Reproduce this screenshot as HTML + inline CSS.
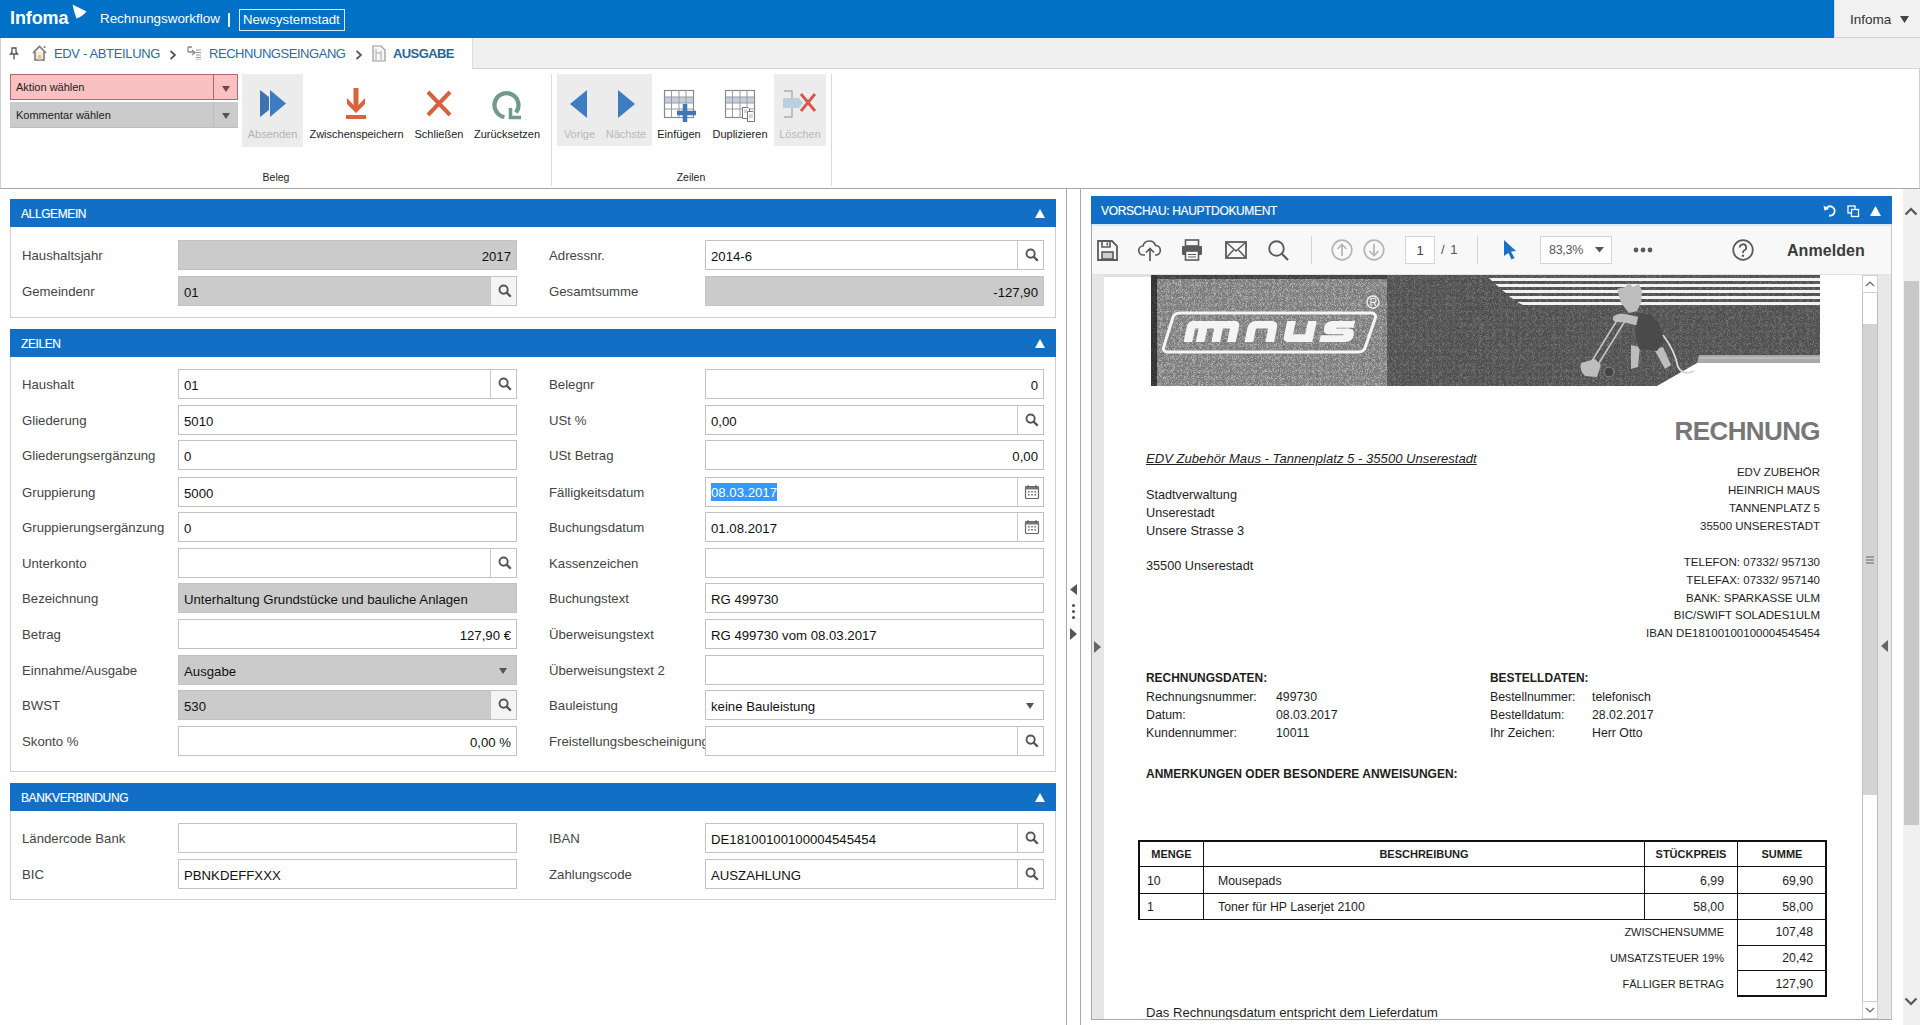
<!DOCTYPE html>
<html><head><meta charset="utf-8">
<style>
*{box-sizing:border-box;margin:0;padding:0}
html,body{width:1920px;height:1025px;overflow:hidden;background:#fff;font-family:"Liberation Sans",sans-serif;color:#222}
.a{position:absolute}
#top{left:0;top:0;width:1920px;height:38px;background:#0071c6}
#crumb{left:0;top:38px;width:1920px;height:31px;background:#f0f0f0;border-bottom:1px solid #d4d4d4}
#ribbon{left:0;top:69px;width:1920px;height:120px;background:#fff;border-bottom:1px solid #a6a6a6;border-left:1px solid #d0d0d0;border-right:1px solid #d0d0d0}
.hdr{background:#1170c6;color:#fff;font-size:12px;letter-spacing:-0.4px;-webkit-text-stroke:0.15px #fff;height:28px;line-height:31px;padding-left:11px}
.sec{border:1px solid #d0d0d0;border-top:none;background:#fff}
.lbl{font-size:13.2px;color:#444;white-space:nowrap;line-height:16px}
.inp{height:30px;border:1px solid #c2c2c2;background:#fff;font-size:13.2px;color:#111;line-height:29px;padding:1px 5px 0 5px;white-space:nowrap;overflow:hidden}
.inp.g{background:#cbcbcb;border-color:#c2c2c2}
.inp.r{text-align:right}
.btn{position:absolute;right:0;top:0;width:26px;height:28px;border-left:1px solid #c8c8c8;background:#fff}
.rb{font-size:11px;color:#222;white-space:nowrap;text-align:center}
</style></head><body>
<div id="top" class="a">
 <div class="a" style="left:10px;top:7px;font-weight:bold;font-size:18px;color:#fff;line-height:22px;letter-spacing:-0.1px">Infoma</div>
 <svg class="a" style="left:72px;top:4px" width="16" height="16" viewBox="0 0 16 16"><path d="M0.5 0.5 L14.5 7.5 Q11 12 4.5 14.5 Q2 8 0.5 0.5 Z" fill="#fff"/></svg>
 <div class="a" style="left:100px;top:11px;font-size:13.4px;color:#fff;line-height:16px">Rechnungsworkflow</div>
 <div class="a" style="left:228px;top:13px;width:2px;height:14px;background:#e6f2ff"></div>
 <div class="a" style="left:239px;top:9px;width:106px;height:22px;border:1px solid #d8ecff;font-size:13.2px;color:#fff;line-height:19px;padding-left:3px">Newsystemstadt</div>
 <div class="a" style="left:1834px;top:0;width:86px;height:38px;background:#f1f1f1;border-left:1px solid #d6d6d6;border-bottom:1px solid #cfcfcf"></div>
 <div class="a" style="left:1850px;top:12px;font-size:13.5px;color:#333;line-height:16px">Infoma</div>
 <svg class="a" style="left:1900px;top:16px" width="9" height="8" viewBox="0 0 9 8"><path d="M0 0 L9 0 L4.5 7 Z" fill="#444"/></svg>
</div>
<div id="crumb" class="a">
 <div class="a" style="left:0;top:0;width:473px;height:31px;background:#fff;border-left:1px solid #d0d0d0;border-right:1px solid #dcdcdc"></div>
 <svg class="a" style="left:9px;top:9px" width="10" height="13" viewBox="0 0 10 13"><path d="M3 1 H7 V5 L8.5 7 H1.5 L3 5 Z" fill="none" stroke="#555" stroke-width="1.3"/><path d="M5 7 V12.5" stroke="#555" stroke-width="1.3"/></svg>
 <svg class="a" style="left:31px;top:7px" width="17" height="16" viewBox="0 0 17 16"><path d="M2 8 L8.5 1.5 L15 8" fill="none" stroke="#777" stroke-width="1.6"/><path d="M4 7 V15 H13 V7" fill="#f3ecd2" stroke="#777" stroke-width="1.5"/><rect x="7" y="10" width="3" height="5" fill="#d8c89a"/><circle cx="13.5" cy="2" r="1" fill="#777"/></svg>
 <div class="a" style="left:54px;top:8px;font-size:13px;color:#2e6a9e;line-height:16px;letter-spacing:-0.35px">EDV - ABTEILUNG</div>
 <svg class="a" style="left:169px;top:12px" width="8" height="10" viewBox="0 0 8 10"><path d="M1.5 1 L6 5 L1.5 9" fill="none" stroke="#555" stroke-width="1.7"/></svg>
 <svg class="a" style="left:186px;top:8px" width="16" height="14" viewBox="0 0 16 14"><path d="M2 1 H6 M2 1 V6 M2 6 H8" stroke="#888" stroke-width="1.3" fill="none"/><path d="M6 4 L9 6.5 L6 9" fill="none" stroke="#7a8fa0" stroke-width="1.3"/><path d="M10 4 H15 M10 6.5 H15 M10 9 H15 M10 11.5 H15 M10 14 H15" stroke="#999" stroke-width="1"/></svg>
 <div class="a" style="left:209px;top:8px;font-size:13px;color:#2e6a9e;line-height:16px;letter-spacing:-0.45px">RECHNUNGSEINGANG</div>
 <svg class="a" style="left:355px;top:12px" width="8" height="10" viewBox="0 0 8 10"><path d="M1.5 1 L6 5 L1.5 9" fill="none" stroke="#555" stroke-width="1.7"/></svg>
 <svg class="a" style="left:372px;top:7px" width="14" height="17" viewBox="0 0 14 17"><path d="M1 1 H9 L13 5 V16 H1 Z" fill="#f6f6f6" stroke="#999" stroke-width="1.2"/><path d="M4 4 V15 M9 6 V15 M4 8 H9" stroke="#aaa" stroke-width="1"/></svg>
 <div class="a" style="left:393px;top:8px;font-size:13px;font-weight:bold;color:#2a6796;line-height:16px;letter-spacing:-0.6px">AUSGABE</div>
</div>
<div id="ribbon" class="a">
 <div class="a" style="left:9px;top:5px;width:228px;height:26px;background:#f9c1c1;border:1px solid #b3666c;font-size:11px;line-height:24px;padding-left:5px;color:#222">Aktion wählen</div>
 <div class="a" style="left:212px;top:5px;width:1px;height:26px;background:#b3666c"></div>
 <svg class="a" style="left:221px;top:17px" width="8" height="6" viewBox="0 0 8 6"><path d="M0 0 H8 L4 6 Z" fill="#6e4848"/></svg>
 <div class="a" style="left:9px;top:33px;width:228px;height:26px;background:#cbcbcb;border-bottom:1px solid #bdbdbd;font-size:11px;line-height:26px;padding-left:6px;color:#222">Kommentar wählen</div>
 <div class="a" style="left:212px;top:33px;width:1px;height:26px;background:#bebebe"></div>
 <svg class="a" style="left:221px;top:44px" width="8" height="6" viewBox="0 0 8 6"><path d="M0 0 H8 L4 6 Z" fill="#555"/></svg>
 <!-- Absenden -->
 <div class="a" style="left:241px;top:5px;width:61px;height:73px;background:#ececec"></div>
 <svg class="a" style="left:258px;top:20px" width="28" height="29" viewBox="0 0 28 29"><path d="M1 1 L10 8 V21 L1 28 Z" fill="#3e73b0"/><path d="M11 1 L27 14.5 L11 28 Z" fill="#3d7cc0"/></svg>
 <div class="a rb" style="left:241px;top:59px;width:61px;color:#b3b3b3">Absenden</div>
 <!-- Zwischenspeichern -->
 <svg class="a" style="left:344px;top:19px" width="22" height="32" viewBox="0 0 22 32"><path d="M8.5 0 H13.5 V17 L20 10 V16 L11 25 L2 16 V10 L8.5 17 Z" fill="#d9623f"/><rect x="1" y="27" width="20" height="4" fill="#d9623f"/></svg>
 <div class="a rb" style="left:300px;top:59px;width:111px">Zwischenspeichern</div>
 <!-- Schliessen -->
 <svg class="a" style="left:425px;top:21px" width="26" height="27" viewBox="0 0 26 27"><path d="M2 2 L24 25 M24 2 L2 25" stroke="#d5623f" stroke-width="4"/></svg>
 <div class="a rb" style="left:408px;top:59px;width:60px">Schließen</div>
 <!-- Zuruecksetzen -->
 <svg class="a" style="left:490px;top:19px" width="32" height="32" viewBox="0 0 32 32"><path d="M13.4 29 A12 12 0 1 1 25 24.5" fill="none" stroke="#6f9a8c" stroke-width="4.3"/><path d="M19.5 20 V29.5 H30" fill="none" stroke="#6f9a8c" stroke-width="3.6"/></svg>
 <div class="a rb" style="left:470px;top:59px;width:72px">Zurücksetzen</div>
 <div class="a rb" style="left:240px;top:102px;width:70px;font-size:10.5px">Beleg</div>
 <div class="a" style="left:550px;top:5px;width:1px;height:112px;background:#d9d9d9"></div>
 <!-- Zeilen -->
 <div class="a" style="left:556px;top:5px;width:95px;height:72px;background:#ececec"></div>
 <svg class="a" style="left:568px;top:20px" width="19" height="30" viewBox="0 0 19 30"><path d="M18 1 V29 L1 15 Z" fill="#3d7cc0"/></svg>
 <svg class="a" style="left:616px;top:20px" width="19" height="30" viewBox="0 0 19 30"><path d="M1 1 V29 L18 15 Z" fill="#3d7cc0"/></svg>
 <div class="a rb" style="left:556px;top:59px;width:45px;color:#b8b8b8">Vorige</div>
 <div class="a rb" style="left:600px;top:59px;width:50px;color:#b8b8b8">Nächste</div>
 <svg class="a" style="left:662px;top:20px" width="35" height="34" viewBox="0 0 35 34"><rect x="1.5" y="1.5" width="29" height="27" fill="#fff" stroke="#8a8a8a" stroke-width="1.2"/><rect x="2" y="8" width="28" height="6" fill="#bfcfdf"/><path d="M1.5 8 H30.5 M1.5 14 H30.5 M1.5 20 H30.5 M8.5 1.5 V28.5 M16 1.5 V28.5 M23 1.5 V28.5" stroke="#9a9a9a" stroke-width="1"/><path d="M22 15 V33 M14 24 H33" stroke="#3e78b6" stroke-width="4.5"/></svg>
 <div class="a rb" style="left:650px;top:59px;width:56px">Einfügen</div>
 <svg class="a" style="left:723px;top:20px" width="35" height="34" viewBox="0 0 35 34"><rect x="1.5" y="1.5" width="29" height="27" fill="#fff" stroke="#8a8a8a" stroke-width="1.2"/><rect x="2" y="8" width="28" height="6" fill="#bfcfdf"/><path d="M1.5 8 H30.5 M1.5 14 H30.5 M1.5 20 H30.5 M8.5 1.5 V28.5 M16 1.5 V28.5 M23 1.5 V28.5" stroke="#9a9a9a" stroke-width="1"/><path d="M18.5 18.5 H24 L25.5 20 V29.5 H18.5 Z" fill="#fff" stroke="#777" stroke-width="1"/><path d="M20 21 H23 M20 23 H23" stroke="#999" stroke-width="0.8"/><path d="M23.5 22.5 H29 L30.5 24 V32.5 H23.5 Z" fill="#fff" stroke="#777" stroke-width="1"/><path d="M25 26 H29 M25 28 H29" stroke="#8aa4c0" stroke-width="0.9"/></svg>
 <div class="a rb" style="left:706px;top:59px;width:66px">Duplizieren</div>
 <div class="a" style="left:773px;top:5px;width:52px;height:72px;background:#ececec"></div>
 <svg class="a" style="left:781px;top:20px" width="35" height="30" viewBox="0 0 35 30"><path d="M2 2 H10 V28 H2" fill="none" stroke="#aaa" stroke-width="1.3"/><rect x="1" y="9" width="16" height="10" fill="#bccfe0"/><path d="M17 9 L21 14 L17 19 Z" fill="#bccfe0"/><path d="M19 5 L33 22 M33 5 L19 22" stroke="#d9564a" stroke-width="2.8"/></svg>
 <div class="a rb" style="left:773px;top:59px;width:52px;color:#b8b8b8">Löschen</div>
 <div class="a rb" style="left:655px;top:102px;width:70px;font-size:10.5px">Zeilen</div>
 <div class="a" style="left:830px;top:5px;width:1px;height:112px;background:#d9d9d9"></div>
</div>
<!--LEFT--><div id="left">
<div class="a hdr" style="left:10px;top:199px;width:1046px">ALLGEMEIN<svg class="a" style="left:1025px;top:10px" width="10" height="9" viewBox="0 0 10 9"><path d="M0 9 L5 0 L10 9 Z" fill="#fff"/></svg></div>
<div class="a sec" style="left:10px;top:227px;width:1046px;height:91px"></div>
<div class="a lbl" style="left:22px;top:248px">Haushaltsjahr</div>
<div class="a inp g r" style="left:178px;top:240px;width:339px;">2017</div>
<div class="a lbl" style="left:22px;top:284px">Gemeindenr</div>
<div class="a inp g" style="left:178px;top:276px;width:339px;padding-right:32px;">01<div class="btn" style="background:#f4f4f4"><svg class="a" style="left:7px;top:7px" width="14" height="14" viewBox="0 0 14 14"><circle cx="5.6" cy="5.6" r="4.1" fill="none" stroke="#555" stroke-width="1.9"/><path d="M8.6 8.6 L12.8 12.8" stroke="#555" stroke-width="2.3"/></svg></div></div>
<div class="a lbl" style="left:549px;top:248px">Adressnr.</div>
<div class="a inp" style="left:705px;top:240px;width:339px;padding-right:32px;">2014-6<div class="btn" style="background:#fff"><svg class="a" style="left:7px;top:7px" width="14" height="14" viewBox="0 0 14 14"><circle cx="5.6" cy="5.6" r="4.1" fill="none" stroke="#555" stroke-width="1.9"/><path d="M8.6 8.6 L12.8 12.8" stroke="#555" stroke-width="2.3"/></svg></div></div>
<div class="a lbl" style="left:549px;top:284px">Gesamtsumme</div>
<div class="a inp g r" style="left:705px;top:276px;width:339px;">-127,90</div>
<div class="a hdr" style="left:10px;top:329px;width:1046px">ZEILEN<svg class="a" style="left:1025px;top:10px" width="10" height="9" viewBox="0 0 10 9"><path d="M0 9 L5 0 L10 9 Z" fill="#fff"/></svg></div>
<div class="a sec" style="left:10px;top:357px;width:1046px;height:415px"></div>
<div class="a lbl" style="left:22px;top:377px">Haushalt</div>
<div class="a inp" style="left:178px;top:369px;width:339px;padding-right:32px;">01<div class="btn" style="background:#fff"><svg class="a" style="left:7px;top:7px" width="14" height="14" viewBox="0 0 14 14"><circle cx="5.6" cy="5.6" r="4.1" fill="none" stroke="#555" stroke-width="1.9"/><path d="M8.6 8.6 L12.8 12.8" stroke="#555" stroke-width="2.3"/></svg></div></div>
<div class="a lbl" style="left:22px;top:413px">Gliederung</div>
<div class="a inp" style="left:178px;top:405px;width:339px;">5010</div>
<div class="a lbl" style="left:22px;top:448px">Gliederungsergänzung</div>
<div class="a inp" style="left:178px;top:440px;width:339px;">0</div>
<div class="a lbl" style="left:22px;top:485px">Gruppierung</div>
<div class="a inp" style="left:178px;top:477px;width:339px;">5000</div>
<div class="a lbl" style="left:22px;top:520px">Gruppierungsergänzung</div>
<div class="a inp" style="left:178px;top:512px;width:339px;">0</div>
<div class="a lbl" style="left:22px;top:556px">Unterkonto</div>
<div class="a inp" style="left:178px;top:548px;width:339px;padding-right:32px;"><div class="btn" style="background:#fff"><svg class="a" style="left:7px;top:7px" width="14" height="14" viewBox="0 0 14 14"><circle cx="5.6" cy="5.6" r="4.1" fill="none" stroke="#555" stroke-width="1.9"/><path d="M8.6 8.6 L12.8 12.8" stroke="#555" stroke-width="2.3"/></svg></div></div>
<div class="a lbl" style="left:22px;top:591px">Bezeichnung</div>
<div class="a inp g" style="left:178px;top:583px;width:339px;">Unterhaltung Grundstücke und bauliche Anlagen</div>
<div class="a lbl" style="left:22px;top:627px">Betrag</div>
<div class="a inp r" style="left:178px;top:619px;width:339px;">127,90 €</div>
<div class="a lbl" style="left:22px;top:663px">Einnahme/Ausgabe</div>
<div class="a inp g" style="left:178px;top:655px;width:339px;padding-right:32px;">Ausgabe<div class="btn" style="border-left:none;background:transparent"><svg class="a" style="left:9px;top:12px" width="8" height="6" viewBox="0 0 8 6"><path d="M0 0 H8 L4 6 Z" fill="#555"/></svg></div></div>
<div class="a lbl" style="left:22px;top:698px">BWST</div>
<div class="a inp g" style="left:178px;top:690px;width:339px;padding-right:32px;">530<div class="btn" style="background:#f4f4f4"><svg class="a" style="left:7px;top:7px" width="14" height="14" viewBox="0 0 14 14"><circle cx="5.6" cy="5.6" r="4.1" fill="none" stroke="#555" stroke-width="1.9"/><path d="M8.6 8.6 L12.8 12.8" stroke="#555" stroke-width="2.3"/></svg></div></div>
<div class="a lbl" style="left:22px;top:734px">Skonto %</div>
<div class="a inp r" style="left:178px;top:726px;width:339px;">0,00 %</div>
<div class="a lbl" style="left:549px;top:377px">Belegnr</div>
<div class="a inp r" style="left:705px;top:369px;width:339px;">0</div>
<div class="a lbl" style="left:549px;top:413px">USt %</div>
<div class="a inp" style="left:705px;top:405px;width:339px;padding-right:32px;">0,00<div class="btn" style="background:#fff"><svg class="a" style="left:7px;top:7px" width="14" height="14" viewBox="0 0 14 14"><circle cx="5.6" cy="5.6" r="4.1" fill="none" stroke="#555" stroke-width="1.9"/><path d="M8.6 8.6 L12.8 12.8" stroke="#555" stroke-width="2.3"/></svg></div></div>
<div class="a lbl" style="left:549px;top:448px">USt Betrag</div>
<div class="a inp r" style="left:705px;top:440px;width:339px;">0,00</div>
<div class="a lbl" style="left:549px;top:485px">Fälligkeitsdatum</div>
<div class="a inp" style="left:705px;top:477px;width:339px;padding-right:32px;"><span style="background:#3399ff;color:#fff;padding:2px 0 1px 0;position:relative;top:-1px">08.03.2017</span><div class="btn" style="background:#fff"><svg class="a" style="left:6px;top:6px" width="16" height="16" viewBox="0 0 16 16"><rect x="1.5" y="2.5" width="13" height="12" rx="1" fill="#fff" stroke="#666" stroke-width="1.2"/><rect x="1.5" y="2.5" width="13" height="3" fill="#777"/><path d="M4 1 V4 M12 1 V4" stroke="#666" stroke-width="1.2"/><g fill="#777"><rect x="4" y="7" width="1.6" height="1.6"/><rect x="7.2" y="7" width="1.6" height="1.6"/><rect x="10.4" y="7" width="1.6" height="1.6"/><rect x="4" y="10" width="1.6" height="1.6"/><rect x="7.2" y="10" width="1.6" height="1.6"/><rect x="10.4" y="10" width="1.6" height="1.6"/></g></svg></div></div>
<div class="a lbl" style="left:549px;top:520px">Buchungsdatum</div>
<div class="a inp" style="left:705px;top:512px;width:339px;padding-right:32px;">01.08.2017<div class="btn" style="background:#fff"><svg class="a" style="left:6px;top:6px" width="16" height="16" viewBox="0 0 16 16"><rect x="1.5" y="2.5" width="13" height="12" rx="1" fill="#fff" stroke="#666" stroke-width="1.2"/><rect x="1.5" y="2.5" width="13" height="3" fill="#777"/><path d="M4 1 V4 M12 1 V4" stroke="#666" stroke-width="1.2"/><g fill="#777"><rect x="4" y="7" width="1.6" height="1.6"/><rect x="7.2" y="7" width="1.6" height="1.6"/><rect x="10.4" y="7" width="1.6" height="1.6"/><rect x="4" y="10" width="1.6" height="1.6"/><rect x="7.2" y="10" width="1.6" height="1.6"/><rect x="10.4" y="10" width="1.6" height="1.6"/></g></svg></div></div>
<div class="a lbl" style="left:549px;top:556px">Kassenzeichen</div>
<div class="a inp" style="left:705px;top:548px;width:339px;"></div>
<div class="a lbl" style="left:549px;top:591px">Buchungstext</div>
<div class="a inp" style="left:705px;top:583px;width:339px;">RG 499730</div>
<div class="a lbl" style="left:549px;top:627px">Überweisungstext</div>
<div class="a inp" style="left:705px;top:619px;width:339px;">RG 499730 vom 08.03.2017</div>
<div class="a lbl" style="left:549px;top:663px">Überweisungstext 2</div>
<div class="a inp" style="left:705px;top:655px;width:339px;"></div>
<div class="a lbl" style="left:549px;top:698px">Bauleistung</div>
<div class="a inp" style="left:705px;top:690px;width:339px;padding-right:32px;">keine Bauleistung<div class="btn" style="border-left:none;background:transparent"><svg class="a" style="left:9px;top:12px" width="8" height="6" viewBox="0 0 8 6"><path d="M0 0 H8 L4 6 Z" fill="#555"/></svg></div></div>
<div class="a lbl" style="left:549px;top:734px">Freistellungsbescheinigung</div>
<div class="a inp" style="left:705px;top:726px;width:339px;padding-right:32px;"><div class="btn" style="background:#fff"><svg class="a" style="left:7px;top:7px" width="14" height="14" viewBox="0 0 14 14"><circle cx="5.6" cy="5.6" r="4.1" fill="none" stroke="#555" stroke-width="1.9"/><path d="M8.6 8.6 L12.8 12.8" stroke="#555" stroke-width="2.3"/></svg></div></div>
<div class="a hdr" style="left:10px;top:783px;width:1046px">BANKVERBINDUNG<svg class="a" style="left:1025px;top:10px" width="10" height="9" viewBox="0 0 10 9"><path d="M0 9 L5 0 L10 9 Z" fill="#fff"/></svg></div>
<div class="a sec" style="left:10px;top:811px;width:1046px;height:89px"></div>
<div class="a lbl" style="left:22px;top:831px">Ländercode Bank</div>
<div class="a inp" style="left:178px;top:823px;width:339px;"></div>
<div class="a lbl" style="left:22px;top:867px">BIC</div>
<div class="a inp" style="left:178px;top:859px;width:339px;">PBNKDEFFXXX</div>
<div class="a lbl" style="left:549px;top:831px">IBAN</div>
<div class="a inp" style="left:705px;top:823px;width:339px;padding-right:32px;">DE18100100100004545454<div class="btn" style="background:#fff"><svg class="a" style="left:7px;top:7px" width="14" height="14" viewBox="0 0 14 14"><circle cx="5.6" cy="5.6" r="4.1" fill="none" stroke="#555" stroke-width="1.9"/><path d="M8.6 8.6 L12.8 12.8" stroke="#555" stroke-width="2.3"/></svg></div></div>
<div class="a lbl" style="left:549px;top:867px">Zahlungscode</div>
<div class="a inp" style="left:705px;top:859px;width:339px;padding-right:32px;">AUSZAHLUNG<div class="btn" style="background:#fff"><svg class="a" style="left:7px;top:7px" width="14" height="14" viewBox="0 0 14 14"><circle cx="5.6" cy="5.6" r="4.1" fill="none" stroke="#555" stroke-width="1.9"/><path d="M8.6 8.6 L12.8 12.8" stroke="#555" stroke-width="2.3"/></svg></div></div>
</div><!--/LEFT-->
<!--RIGHT--><div id="right">
<div class="a" style="left:1066px;top:189px;width:1px;height:836px;background:#a8a8a8"></div>
<div class="a" style="left:1080px;top:189px;width:1px;height:836px;background:#a8a8a8"></div>
<svg class="a" style="left:1068px;top:584px" width="11" height="58" viewBox="0 0 11 58"><path d="M9 0 V11 L2 5.5 Z" fill="#555"/><circle cx="5.5" cy="21.5" r="1.6" fill="#555"/><circle cx="5.5" cy="27.5" r="1.6" fill="#555"/><circle cx="5.5" cy="33.5" r="1.6" fill="#555"/><path d="M2 44 V56 L9 50 Z" fill="#555"/></svg>
<div class="a" style="left:1091px;top:196px;width:801px;height:824px;border-left:1px solid #a8a8a8;border-right:1px solid #c8c8c8;border-bottom:1px solid #a8a8a8;background:#fff"></div>
<div class="a hdr" style="left:1091px;top:196px;width:801px;height:28px;line-height:30px;padding-left:10px;letter-spacing:-0.35px">VORSCHAU: HAUPTDOKUMENT</div>
<svg class="a" style="left:1823px;top:204px" width="14" height="13" viewBox="0 0 14 13"><path d="M3.5 4 A4.6 4.6 0 1 1 6 11.5" fill="none" stroke="#fff" stroke-width="1.8"/><path d="M0.5 1.5 L1.5 6.5 L6 5 Z" fill="#fff"/></svg>
<svg class="a" style="left:1847px;top:205px" width="13" height="13" viewBox="0 0 13 13"><rect x="1" y="1" width="7" height="7" fill="none" stroke="#fff" stroke-width="1.3"/><rect x="4.5" y="4.5" width="7" height="7" fill="#1170c6" stroke="#fff" stroke-width="1.3"/></svg>
<svg class="a" style="left:1870px;top:206px" width="11" height="10" viewBox="0 0 11 10"><path d="M0 10 L5.5 0 L11 10 Z" fill="#fff"/></svg>
<div class="a" style="left:1092px;top:224px;width:799px;height:51px;background:#f8f8f8;border-top:2px solid #d9e8f6;border-bottom:1px solid #e2e2e2"></div>
<svg class="a" style="left:1097px;top:240px" width="21" height="21" viewBox="0 0 21 21"><path d="M1 1 H15 L20 6 V20 H1 Z" fill="none" stroke="#5b5b5b" stroke-width="1.8"/><path d="M5 1 V7 H13 V1" fill="none" stroke="#5b5b5b" stroke-width="1.6"/><rect x="9.5" y="2.5" width="1.6" height="3" fill="#5b5b5b"/><rect x="5" y="12" width="11" height="7" fill="#cfcfcf" stroke="#5b5b5b" stroke-width="1.6"/></svg>
<svg class="a" style="left:1138px;top:239px" width="24" height="23" viewBox="0 0 24 23"><path d="M7 16 H5.5 A4.5 4.5 0 0 1 5 7 A6.5 6.5 0 0 1 17.5 6.5 A4.8 4.8 0 0 1 18.5 16 H17" fill="none" stroke="#5b5b5b" stroke-width="1.7"/><path d="M12 22 V10 M8 13.5 L12 9.5 L16 13.5" fill="none" stroke="#5b5b5b" stroke-width="1.7"/></svg>
<svg class="a" style="left:1181px;top:239px" width="22" height="22" viewBox="0 0 22 22"><rect x="4.5" y="1" width="13" height="6" fill="none" stroke="#5b5b5b" stroke-width="1.6"/><rect x="1" y="7" width="20" height="9" rx="1" fill="#5b5b5b"/><rect x="4.5" y="12" width="13" height="9" fill="#fff" stroke="#5b5b5b" stroke-width="1.6"/><path d="M7 15.5 H15 M7 18 H15" stroke="#5b5b5b" stroke-width="1.2"/></svg>
<svg class="a" style="left:1225px;top:241px" width="22" height="18" viewBox="0 0 22 18"><rect x="1" y="1" width="20" height="16" fill="none" stroke="#5b5b5b" stroke-width="1.8"/><path d="M1.5 1.5 L11 10 L20.5 1.5 M1.5 16.5 L8.5 9 M20.5 16.5 L13.5 9" fill="none" stroke="#5b5b5b" stroke-width="1.5"/></svg>
<svg class="a" style="left:1268px;top:240px" width="21" height="21" viewBox="0 0 21 21"><circle cx="8.5" cy="8.5" r="7.3" fill="none" stroke="#5b5b5b" stroke-width="1.9"/><path d="M13.8 13.8 L20 20" stroke="#5b5b5b" stroke-width="2.2"/></svg>
<div class="a" style="left:1311px;top:236px;width:1px;height:28px;background:#d4d4d4"></div>
<svg class="a" style="left:1331px;top:239px" width="22" height="22" viewBox="0 0 22 22"><circle cx="11" cy="11" r="9.8" fill="none" stroke="#b5b5b5" stroke-width="1.7"/><path d="M11 17 V5.5 M6.5 10 L11 5.5 L15.5 10" fill="none" stroke="#b5b5b5" stroke-width="1.7"/></svg>
<svg class="a" style="left:1363px;top:239px" width="22" height="22" viewBox="0 0 22 22"><circle cx="11" cy="11" r="9.8" fill="none" stroke="#b5b5b5" stroke-width="1.7"/><path d="M11 5 V16.5 M6.5 12 L11 16.5 L15.5 12" fill="none" stroke="#b5b5b5" stroke-width="1.7"/></svg>
<div class="a" style="left:1405px;top:236px;width:30px;height:28px;background:#fff;border:1px solid #d6d6d6;font-size:13px;color:#444;text-align:center;line-height:27px">1</div>
<div class="a" style="left:1441px;top:242px;font-size:13px;color:#555;line-height:16px;letter-spacing:1px">/&nbsp;1</div>
<div class="a" style="left:1477px;top:236px;width:1px;height:28px;background:#d4d4d4"></div>
<svg class="a" style="left:1503px;top:240px" width="14" height="20" viewBox="0 0 14 20"><path d="M1 0 L13 11 L8 11.5 L11.5 18 L8.5 19.5 L5.5 13 L1 16 Z" fill="#1c6fc7"/></svg>
<div class="a" style="left:1540px;top:236px;width:72px;height:28px;background:#fff;border:1px solid #d6d6d6;font-size:12.5px;color:#555;line-height:27px;padding-left:8px;letter-spacing:-0.3px">83,3%</div>
<svg class="a" style="left:1595px;top:247px" width="9" height="6" viewBox="0 0 9 6"><path d="M0 0 H9 L4.5 5.5 Z" fill="#555"/></svg>
<svg class="a" style="left:1633px;top:247px" width="20" height="6" viewBox="0 0 20 6"><circle cx="3" cy="3" r="2.4" fill="#5b5b5b"/><circle cx="10" cy="3" r="2.4" fill="#5b5b5b"/><circle cx="17" cy="3" r="2.4" fill="#5b5b5b"/></svg>
<svg class="a" style="left:1732px;top:239px" width="22" height="22" viewBox="0 0 22 22"><circle cx="11" cy="11" r="9.8" fill="none" stroke="#5b5b5b" stroke-width="1.8"/><path d="M7.8 8.5 A3.2 3.2 0 1 1 12 11.5 C11 12 11 12.5 11 14" fill="none" stroke="#5b5b5b" stroke-width="1.8"/><circle cx="11" cy="16.8" r="1.2" fill="#5b5b5b"/></svg>
<div class="a" style="left:1787px;top:241px;font-size:16px;font-weight:bold;color:#3b3b3b;line-height:19px;letter-spacing:0.05px">Anmelden</div>
<div class="a" style="left:1092px;top:275px;width:12px;height:744px;background:#e6e6e6"></div>
<div class="a" style="left:1104px;top:275px;width:47px;height:2px;background:#e0e0e0"></div>
<div class="a" style="left:1862px;top:275px;width:16px;height:744px;background:#fff;border-left:1px solid #bdbdbd;border-right:1px solid #bdbdbd"></div>
<div class="a" style="left:1862px;top:275px;width:16px;height:18px;border:1px solid #cfcfcf;background:#fff"></div>
<svg class="a" style="left:1865px;top:280px" width="10" height="7" viewBox="0 0 10 7"><path d="M1 6 L5 2 L9 6" fill="none" stroke="#666" stroke-width="1.2"/></svg>
<div class="a" style="left:1863px;top:324px;width:14px;height:471px;background:#d3d3d3"></div>
<svg class="a" style="left:1866px;top:556px" width="8" height="8" viewBox="0 0 8 8"><path d="M0 1 H8 M0 4 H8 M0 7 H8" stroke="#666" stroke-width="1.2"/></svg>
<div class="a" style="left:1862px;top:1001px;width:16px;height:18px;border:1px solid #cfcfcf;background:#fff"></div>
<svg class="a" style="left:1865px;top:1007px" width="10" height="7" viewBox="0 0 10 7"><path d="M1 1 L5 5 L9 1" fill="none" stroke="#666" stroke-width="1.2"/></svg>
<div class="a" style="left:1878px;top:275px;width:13px;height:744px;background:#e8e8e8"></div>
<svg class="a" style="left:1881px;top:640px" width="7" height="12" viewBox="0 0 7 12"><path d="M7 0 V12 L0 6 Z" fill="#666"/></svg>
<svg class="a" style="left:1094px;top:641px" width="7" height="12" viewBox="0 0 7 12"><path d="M0 0 V12 L7 6 Z" fill="#666"/></svg>
<div class="a" style="left:1903px;top:189px;width:17px;height:836px;background:#f0f0f0"></div>
<svg class="a" style="left:1904px;top:206px" width="14" height="10" viewBox="0 0 14 10"><path d="M1.5 8.5 L7 3 L12.5 8.5" fill="none" stroke="#555" stroke-width="2.2"/></svg>
<div class="a" style="left:1904px;top:281px;width:15px;height:544px;background:#c8c8c8"></div>
<svg class="a" style="left:1904px;top:997px" width="14" height="10" viewBox="0 0 14 10"><path d="M1.5 1.5 L7 7 L12.5 1.5" fill="none" stroke="#555" stroke-width="2.2"/></svg>
<svg class="a" style="left:1151px;top:275px" width="669" height="111" viewBox="0 0 669 111">
<defs>
<filter id="nz" x="0" y="0" width="100%" height="100%"><feTurbulence type="turbulence" baseFrequency="0.85" numOctaves="1" seed="7"/><feColorMatrix type="matrix" values="0 0 0 0 0  0 0 0 0 0  0 0 0 0 0  -2.2 0 0 0 1.05"/></filter>
</defs>
<rect x="0" y="0" width="669" height="111" fill="#5e5e5e"/>
<rect x="0" y="0" width="6" height="111" fill="#4a4a4a"/>
<rect x="6" y="4" width="230" height="107" fill="#8c8c8c"/>
<path d="M236 0 H669 V111 H236 Z" fill="#777777"/>
<rect x="6" y="4" width="230" height="107" fill="#b9b9b9"/>
<rect x="0" y="0" width="669" height="111" filter="url(#nz)" opacity="0.35"/>
<g fill="#f2f2f2">
<path d="M338 3 H669 V6 H341 Z"/>
<path d="M344 9 H669 V12 H348 Z"/>
<path d="M351 15 H669 V18 H355 Z"/>
<path d="M358 21 H669 V24 H362 Z"/>
<path d="M366 27 H669 V30 H372 Z"/>
</g>
<path d="M506 111 L546 88 H669 V111 Z" fill="#fff"/>
<path d="M548 80 H669 V88 H546 Z" fill="#a9a9a9"/><path d="M548 83 H669" stroke="#d0d0d0" stroke-width="1"/>
<path d="M22 42 Q24 38 29 38 H220 Q226 38 224 44 L214 73 Q212 77 207 77 H17 Q11 77 13 71 Z" fill="none" stroke="#f4f4f4" stroke-width="3"/>
<g fill="#f4f4f4" transform="translate(37,46) skewX(-12) scale(0.87,0.95)">
<path d="M6 0 H54 Q60 0 60 6 V22 H50 V8 H42 V22 H32 V8 H24 V22 H14 V8 H10 L10 22 H0 V6 Q0 0 6 0 Z"/>
<path d="M70 8 Q70 0 78 0 H96 Q104 0 104 8 V22 H94 V8 H80 V22 H70 Z"/>
<path d="M114 0 H124 V14 H138 V0 H148 V22 H120 Q114 22 114 16 Z"/>
<path d="M160 0 H192 V7 H172 V8 H186 Q194 8 194 15 Q194 22 186 22 H156 V15 H182 V14 H166 Q158 14 158 7 Q158 0 166 0 Z"/>
</g>
<circle cx="222" cy="27" r="6" fill="none" stroke="#eee" stroke-width="1.4"/><path d="M220 31 V23.5 H223 Q225 23.5 225 25.5 Q225 27.5 223 27.5 H220 M222.5 27.5 L225 31" fill="none" stroke="#eee" stroke-width="1.2"/>
<g fill="#bdbdbd">
<path d="M466 14 L474 12 L478 8 L482 12 L488 9 L491 16 L490 28 L486 36 L478 38 L470 28 Z"/>
<path d="M462 42 Q466 38 474 39 L488 42 L497 44 L496 52 L484 50 L472 47 Q464 48 462 45 Z"/>
<path d="M480 70 L489 72 L487 92 L480 94 Z"/>
<path d="M503 74 L512 72 L520 90 L514 94 Z"/>
<path d="M430 88 L444 84 L450 90 L446 102 L434 101 Q428 96 430 88 Z"/>
</g>
<path d="M468 42 L441 86 M474 46 L448 88" stroke="#c4c4c4" stroke-width="1.6" fill="none"/>
<path d="M488 38 L500 40 Q514 52 512 68 L506 76 L488 74 L484 56 Z" fill="#4a4a4a"/>
<circle cx="458" cy="97" r="5" fill="#444" stroke="#888" stroke-width="1"/>
<path d="M512 60 Q524 76 527 92 Q532 101 543 96" fill="none" stroke="#d6d6d6" stroke-width="1.8"/>
</svg>
<div class="a" style="white-space:nowrap;line-height:16px;color:#1e1e1e;left:1146px;top:451px;font-size:13.1px;font-style:italic;text-decoration:underline;">EDV Zubehör Maus - Tannenplatz 5 - 35500 Unserestadt</div>
<div class="a" style="white-space:nowrap;line-height:16px;color:#1e1e1e;left:1146px;top:487px;font-size:12.7px;">Stadtverwaltung</div>
<div class="a" style="white-space:nowrap;line-height:16px;color:#1e1e1e;left:1146px;top:505px;font-size:12.7px;">Unserestadt</div>
<div class="a" style="white-space:nowrap;line-height:16px;color:#1e1e1e;left:1146px;top:523px;font-size:12.7px;">Unsere Strasse 3</div>
<div class="a" style="white-space:nowrap;line-height:16px;color:#1e1e1e;left:1146px;top:558px;font-size:12.7px;">35500 Unserestadt</div>
<div class="a" style="white-space:nowrap;line-height:16px;color:#1e1e1e;right:100px;top:416px;font-size:26px;font-weight:bold;color:#777;line-height:30px;letter-spacing:-0.6px">RECHNUNG</div>
<div class="a" style="white-space:nowrap;line-height:16px;color:#1e1e1e;right:100px;top:464px;font-size:11.5px;">EDV ZUBEHÖR</div>
<div class="a" style="white-space:nowrap;line-height:16px;color:#1e1e1e;right:100px;top:482px;font-size:11.5px;">HEINRICH MAUS</div>
<div class="a" style="white-space:nowrap;line-height:16px;color:#1e1e1e;right:100px;top:500px;font-size:11.5px;">TANNENPLATZ 5</div>
<div class="a" style="white-space:nowrap;line-height:16px;color:#1e1e1e;right:100px;top:518px;font-size:11.5px;">35500 UNSERESTADT</div>
<div class="a" style="white-space:nowrap;line-height:16px;color:#1e1e1e;right:100px;top:554px;font-size:11.5px;">TELEFON: 07332/ 957130</div>
<div class="a" style="white-space:nowrap;line-height:16px;color:#1e1e1e;right:100px;top:572px;font-size:11.5px;">TELEFAX: 07332/ 957140</div>
<div class="a" style="white-space:nowrap;line-height:16px;color:#1e1e1e;right:100px;top:590px;font-size:11.5px;">BANK: SPARKASSE ULM</div>
<div class="a" style="white-space:nowrap;line-height:16px;color:#1e1e1e;right:100px;top:607px;font-size:11.5px;">BIC/SWIFT SOLADES1ULM</div>
<div class="a" style="white-space:nowrap;line-height:16px;color:#1e1e1e;right:100px;top:625px;font-size:11.5px;">IBAN DE18100100100004545454</div>
<div class="a" style="white-space:nowrap;line-height:16px;color:#1e1e1e;left:1146px;top:670px;font-size:11.95px;font-weight:bold;">RECHNUNGSDATEN:</div>
<div class="a" style="white-space:nowrap;line-height:16px;color:#1e1e1e;left:1146px;top:689px;font-size:12.3px;">Rechnungsnummer:</div>
<div class="a" style="white-space:nowrap;line-height:16px;color:#1e1e1e;left:1276px;top:689px;font-size:12.3px;">499730</div>
<div class="a" style="white-space:nowrap;line-height:16px;color:#1e1e1e;left:1146px;top:707px;font-size:12.3px;">Datum:</div>
<div class="a" style="white-space:nowrap;line-height:16px;color:#1e1e1e;left:1276px;top:707px;font-size:12.3px;">08.03.2017</div>
<div class="a" style="white-space:nowrap;line-height:16px;color:#1e1e1e;left:1146px;top:725px;font-size:12.3px;">Kundennummer:</div>
<div class="a" style="white-space:nowrap;line-height:16px;color:#1e1e1e;left:1276px;top:725px;font-size:12.3px;">10011</div>
<div class="a" style="white-space:nowrap;line-height:16px;color:#1e1e1e;left:1490px;top:670px;font-size:11.95px;font-weight:bold;">BESTELLDATEN:</div>
<div class="a" style="white-space:nowrap;line-height:16px;color:#1e1e1e;left:1490px;top:689px;font-size:12.3px;">Bestellnummer:</div>
<div class="a" style="white-space:nowrap;line-height:16px;color:#1e1e1e;left:1592px;top:689px;font-size:12.3px;">telefonisch</div>
<div class="a" style="white-space:nowrap;line-height:16px;color:#1e1e1e;left:1490px;top:707px;font-size:12.3px;">Bestelldatum:</div>
<div class="a" style="white-space:nowrap;line-height:16px;color:#1e1e1e;left:1592px;top:707px;font-size:12.3px;">28.02.2017</div>
<div class="a" style="white-space:nowrap;line-height:16px;color:#1e1e1e;left:1490px;top:725px;font-size:12.3px;">Ihr Zeichen:</div>
<div class="a" style="white-space:nowrap;line-height:16px;color:#1e1e1e;left:1592px;top:725px;font-size:12.3px;">Herr Otto</div>
<div class="a" style="white-space:nowrap;line-height:16px;color:#1e1e1e;left:1146px;top:766px;font-size:12.0px;font-weight:bold;">ANMERKUNGEN ODER BESONDERE ANWEISUNGEN:</div>
<div class="a" style="left:1138px;top:840px;width:689px;height:80px;border:2px solid #111;border-bottom-width:1px"></div>
<div class="a" style="left:1138px;top:866px;width:689px;height:1px;background:#111"></div>
<div class="a" style="left:1138px;top:893px;width:689px;height:1px;background:#111"></div>
<div class="a" style="left:1203px;top:840px;width:1px;height:80px;background:#111"></div>
<div class="a" style="left:1644px;top:840px;width:1px;height:80px;background:#111"></div>
<div class="a" style="left:1737px;top:840px;width:1px;height:80px;background:#111"></div>
<div class="a" style="left:1737px;top:918px;width:90px;height:79px;border-left:1px solid #111;border-right:2px solid #111;border-bottom:2px solid #111"></div>
<div class="a" style="left:1737px;top:945px;width:90px;height:1px;background:#111"></div>
<div class="a" style="left:1737px;top:970px;width:90px;height:1px;background:#111"></div>
<div class="a" style="white-space:nowrap;line-height:16px;color:#1e1e1e;left:1140px;width:63px;top:846px;text-align:center;font-weight:bold;font-size:11px;">MENGE</div>
<div class="a" style="white-space:nowrap;line-height:16px;color:#1e1e1e;left:1204px;width:440px;top:846px;text-align:center;font-weight:bold;font-size:11px;">BESCHREIBUNG</div>
<div class="a" style="white-space:nowrap;line-height:16px;color:#1e1e1e;left:1645px;width:92px;top:846px;text-align:center;font-weight:bold;font-size:11px;">STÜCKPREIS</div>
<div class="a" style="white-space:nowrap;line-height:16px;color:#1e1e1e;left:1738px;width:88px;top:846px;text-align:center;font-weight:bold;font-size:11px;">SUMME</div>
<div class="a" style="white-space:nowrap;line-height:16px;color:#1e1e1e;left:1147px;top:873px;font-size:12.3px;">10</div>
<div class="a" style="white-space:nowrap;line-height:16px;color:#1e1e1e;left:1218px;top:873px;font-size:12.3px;">Mousepads</div>
<div class="a" style="white-space:nowrap;line-height:16px;color:#1e1e1e;right:196px;top:873px;font-size:12.3px;">6,99</div>
<div class="a" style="white-space:nowrap;line-height:16px;color:#1e1e1e;right:107px;top:873px;font-size:12.3px;">69,90</div>
<div class="a" style="white-space:nowrap;line-height:16px;color:#1e1e1e;left:1147px;top:899px;font-size:12.3px;">1</div>
<div class="a" style="white-space:nowrap;line-height:16px;color:#1e1e1e;left:1218px;top:899px;font-size:12.3px;">Toner für HP Laserjet 2100</div>
<div class="a" style="white-space:nowrap;line-height:16px;color:#1e1e1e;right:196px;top:899px;font-size:12.3px;">58,00</div>
<div class="a" style="white-space:nowrap;line-height:16px;color:#1e1e1e;right:107px;top:899px;font-size:12.3px;">58,00</div>
<div class="a" style="white-space:nowrap;line-height:16px;color:#1e1e1e;right:196px;top:924px;font-size:11.0px;">ZWISCHENSUMME</div>
<div class="a" style="white-space:nowrap;line-height:16px;color:#1e1e1e;right:107px;top:924px;font-size:12.3px;">107,48</div>
<div class="a" style="white-space:nowrap;line-height:16px;color:#1e1e1e;right:196px;top:950px;font-size:11.0px;">UMSATZSTEUER 19%</div>
<div class="a" style="white-space:nowrap;line-height:16px;color:#1e1e1e;right:107px;top:950px;font-size:12.3px;">20,42</div>
<div class="a" style="white-space:nowrap;line-height:16px;color:#1e1e1e;right:196px;top:976px;font-size:11.0px;">FÄLLIGER BETRAG</div>
<div class="a" style="white-space:nowrap;line-height:16px;color:#1e1e1e;right:107px;top:976px;font-size:12.3px;">127,90</div>
<div class="a" style="left:1104px;top:1003px;width:758px;height:16px;overflow:hidden"><div class="a" style="white-space:nowrap;line-height:16px;color:#1e1e1e;left:42px;top:2px;font-size:13.1px">Das Rechnungsdatum entspricht dem Lieferdatum</div></div>
</div><!--/RIGHT-->
</body></html>
